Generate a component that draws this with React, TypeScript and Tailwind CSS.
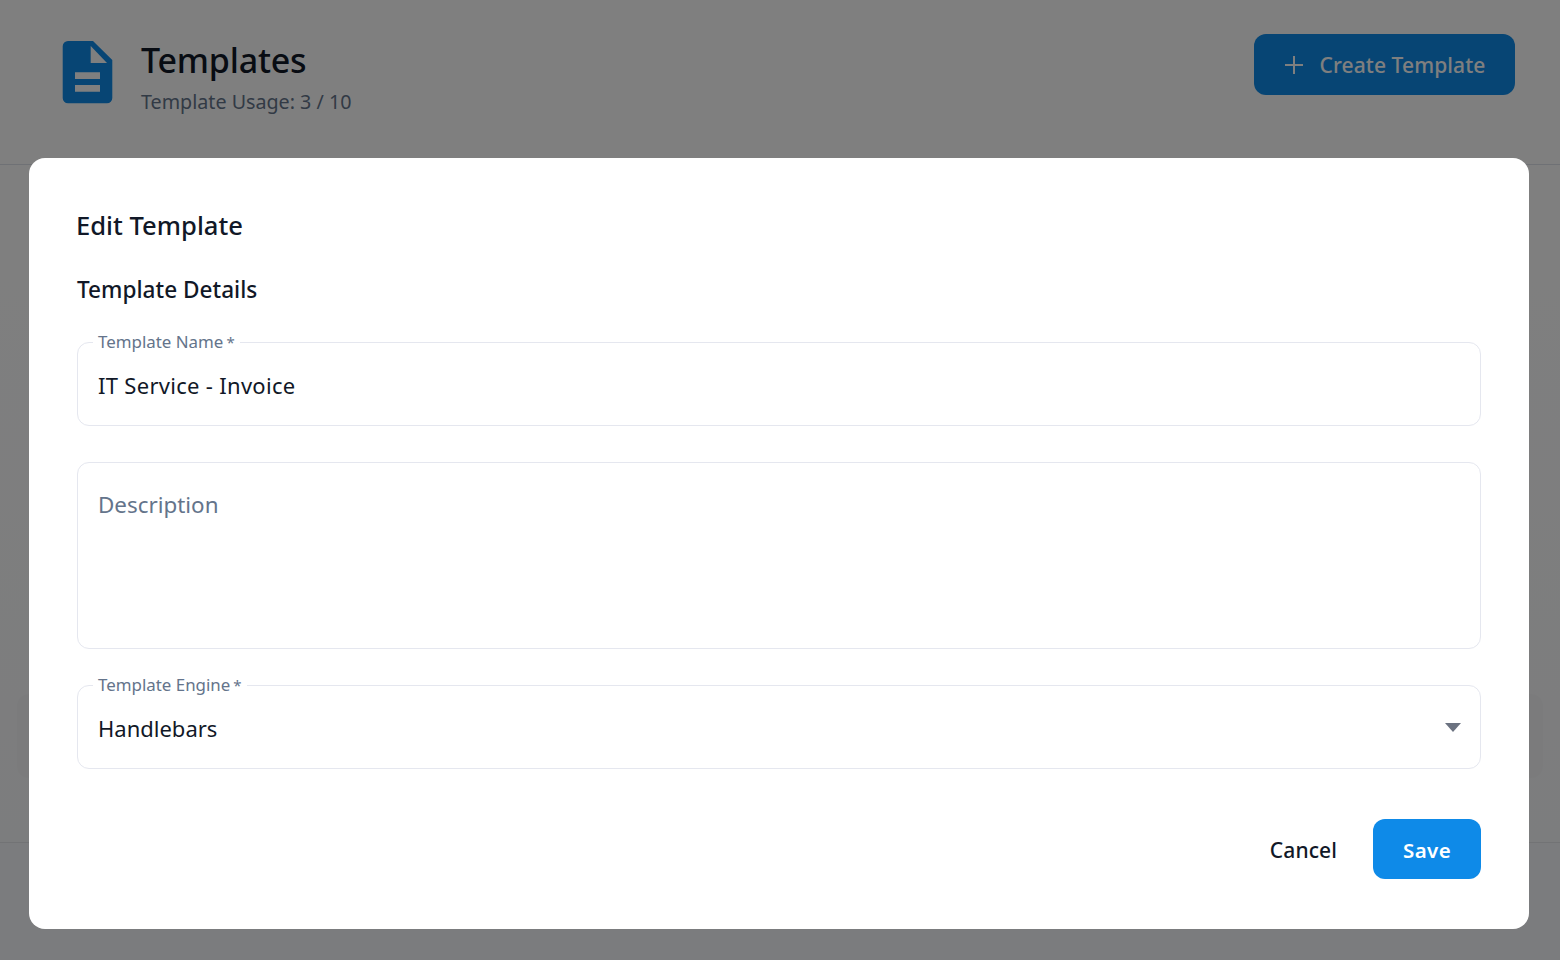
const font = "font-['Noto_Sans',sans-serif]"

function OutlinedField({ label, value, valueClass }: { label: string; value: string; valueClass?: string }) {
  return (
    <div className="relative h-[84px] rounded-xl border border-[#e5e7ef] px-5 pt-[27px]">
      <span className="absolute left-[15px] top-[-12px] bg-white px-[5px] text-[16.9px] leading-[22px] text-[#64748b]">
        {label}
        <span className="ml-[3px] text-[15px]">*</span>
      </span>
      <p className={`text-[22px] leading-[30px] text-[#111827] ${valueClass ?? ""}`}>{value}</p>
    </div>
  )
}

function FileIcon() {
  return (
    <svg width="53" height="65" viewBox="0 0 53 65" className="shrink-0">
      <path
        d="M7 1H32L51.3 20V58a5.3 5.3 0 0 1-5.3 5.3H7A5.3 5.3 0 0 1 1.7 58V6.3A5.3 5.3 0 0 1 7 1Z"
        fill="#0e8ae8"
      />
      <path d="M29.7 6 46 23H29.7Z" fill="#fff" />
      <path d="M14 32.3h25V39H14ZM14 45h25v6.7H14Z" fill="#fff" />
    </svg>
  )
}

export default function App() {
  return (
    <div className={`${font} flex h-[960px] flex-col bg-white`}>
      <header className="flex h-[165px] items-start justify-between border-b border-[#dfe3ea] pl-[61px] pr-[45px]">
        <div className="flex items-start gap-[27px] pt-[40px]">
          <FileIcon />
          <div className="mt-[-1px]">
            <h1 className="text-[34px] leading-[42px] font-medium tracking-[-0.2px] text-[#111827]">Templates</h1>
            <p className="mt-[7px] text-[19.7px] leading-[28px] text-[#64748b]">Template Usage: 3 / 10</p>
          </div>
        </div>
        <button className="mt-[34px] flex h-[61px] w-[261px] items-center justify-center gap-[16px] rounded-xl bg-[#0e8ae8] pt-[3px] text-[21px] font-medium tracking-[0.1px] text-white">
          <svg width="20" height="20" viewBox="0 0 20 20" fill="none" stroke="currentColor" strokeWidth="2" className="mt-[-3px]">
            <path d="M10 1v18M1 10h18" />
          </svg>
          Create Template
        </button>
      </header>
      <main className="flex flex-1 flex-col justify-end bg-gradient-to-b from-[#ffffff] to-[#f9fafc] px-[17px] pb-[64px]">
        <div className="h-[84px] rounded-xl bg-[#f6f7f9]" />
      </main>
      <footer className="h-[118px] border-t border-[#e5e7eb] bg-[#f7f8fc]" />

      <div className="fixed inset-0 flex items-start justify-center bg-black/50 pt-[158px]">
        <div className="ml-[-2px] h-[771px] w-[1500px] rounded-2xl bg-white px-12 pt-[50px]">
          <h2 className="ml-[-1px] text-[25.6px] leading-[36px] font-medium text-[#111827]">Edit Template</h2>
          <h3 className="mt-[31px] text-[22.6px] leading-[30px] font-medium text-[#111827]">Template Details</h3>

          <div className="mt-[37px] flex flex-col gap-9">
            <OutlinedField label="Template Name" value="IT Service - Invoice" valueClass="tracking-[0.3px]" />
            <div className="h-[187px] rounded-xl border border-[#e5e7ef] px-5 pt-[27px]">
              <p className="text-[22.4px] leading-[30px] text-[#64748b]">Description</p>
            </div>
            <div className="relative">
              <OutlinedField label="Template Engine" value="Handlebars" />
              <span className="absolute right-[20px] top-[38px] h-0 w-0 border-x-[8px] border-t-[9px] border-x-transparent border-t-[#6b7280]" />
            </div>
          </div>

          <div className="mt-[50px] flex items-center justify-end gap-9">
            <button className="pt-[4px] text-[21px] font-medium tracking-[0.1px] text-[#111827]">Cancel</button>
            <button className="h-[60px] w-[108px] rounded-xl bg-[#0e8ae8] pt-[2px] text-[20.5px] font-semibold tracking-[0.4px] text-white">
              Save
            </button>
          </div>
        </div>
      </div>
    </div>
  )
}
